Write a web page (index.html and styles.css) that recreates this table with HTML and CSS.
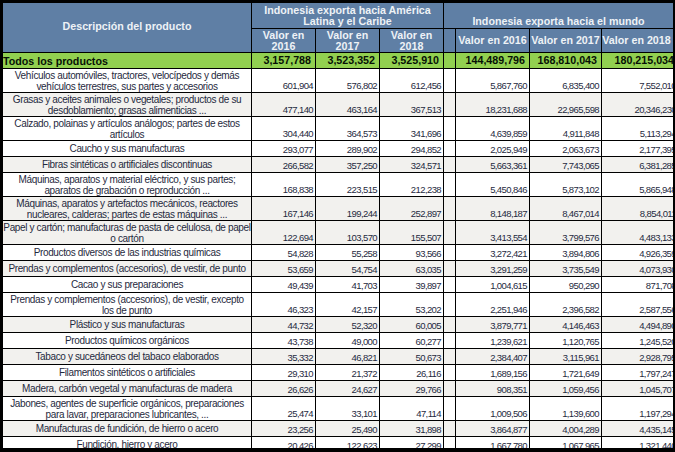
FILE: index.html
```html
<!DOCTYPE html>
<html lang="es">
<head>
<meta charset="utf-8">
<title>Indonesia exporta</title>
<link rel="stylesheet" href="styles.css">
</head>
<body>
<div class="sheet">
  <div class="grid">
    <div class="hd desc-h">Descripción del producto</div>
    <div class="hd grp-latam">Indonesia exporta hacia América<br>Latina y el Caribe</div>
    <div class="hd grp-world">Indonesia exporta hacia el mundo</div>
    <div class="hd">Valor en<br>2016</div>
    <div class="hd">Valor en<br>2017</div>
    <div class="hd">Valor en<br>2018</div>
    <div class="hd"></div>
    <div class="hd">Valor en 2016</div>
    <div class="hd">Valor en 2017</div>
    <div class="hd last">Valor en 2018</div>

    <div class="row total">
      <div class="lbl">Todos los productos</div>
      <div class="num">3,157,788</div><div class="num">3,523,352</div><div class="num">3,525,910</div><div></div>
      <div class="num">144,489,796</div><div class="num">168,810,043</div><div class="num">180,215,034</div>
    </div>

    <div class="row tall">
      <div class="desc">Vehículos automóviles, tractores, velocípedos y demás<br>vehículos terrestres, sus partes y accesorios</div>
      <div class="num">601,904</div><div class="num">576,802</div><div class="num">612,456</div><div></div>
      <div class="num">5,867,760</div><div class="num">6,835,400</div><div class="num">7,552,010</div>
    </div>
    <div class="row tall alt">
      <div class="desc">Grasas y aceites animales o vegetales; productos de su<br>desdoblamiento; grasas alimenticias ...</div>
      <div class="num">477,140</div><div class="num">463,164</div><div class="num">367,513</div><div></div>
      <div class="num">18,231,688</div><div class="num">22,965,598</div><div class="num">20,346,230</div>
    </div>
    <div class="row tall">
      <div class="desc">Calzado, polainas y artículos análogos; partes de estos<br>artículos</div>
      <div class="num">304,440</div><div class="num">364,573</div><div class="num">341,696</div><div></div>
      <div class="num">4,639,859</div><div class="num">4,911,848</div><div class="num">5,113,294</div>
    </div>
    <div class="row">
      <div class="desc">Caucho y sus manufacturas</div>
      <div class="num">293,077</div><div class="num">289,902</div><div class="num">294,852</div><div></div>
      <div class="num">2,025,949</div><div class="num">2,063,673</div><div class="num">2,177,395</div>
    </div>
    <div class="row alt">
      <div class="desc">Fibras sintéticas o artificiales discontinuas</div>
      <div class="num">266,582</div><div class="num">357,250</div><div class="num">324,571</div><div></div>
      <div class="num">5,663,361</div><div class="num">7,743,065</div><div class="num">6,381,285</div>
    </div>
    <div class="row tall">
      <div class="desc">Máquinas, aparatos y material eléctrico, y sus partes;<br>aparatos de grabación o reproducción ...</div>
      <div class="num">168,838</div><div class="num">223,515</div><div class="num">212,238</div><div></div>
      <div class="num">5,450,846</div><div class="num">5,873,102</div><div class="num">5,865,948</div>
    </div>
    <div class="row tall alt">
      <div class="desc">Máquinas, aparatos y artefactos mecánicos, reactores<br>nucleares, calderas; partes de estas máquinas ...</div>
      <div class="num">167,146</div><div class="num">199,244</div><div class="num">252,897</div><div></div>
      <div class="num">8,148,187</div><div class="num">8,467,014</div><div class="num">8,854,011</div>
    </div>
    <div class="row tall alt">
      <div class="desc">Papel y cartón; manufacturas de pasta de celulosa, de papel<br>o cartón</div>
      <div class="num">122,694</div><div class="num">103,570</div><div class="num">155,507</div><div></div>
      <div class="num">3,413,554</div><div class="num">3,799,576</div><div class="num">4,483,133</div>
    </div>
    <div class="row">
      <div class="desc">Productos diversos de las industrias químicas</div>
      <div class="num">54,828</div><div class="num">55,258</div><div class="num">93,566</div><div></div>
      <div class="num">3,272,421</div><div class="num">3,894,806</div><div class="num">4,926,359</div>
    </div>
    <div class="row alt">
      <div class="desc">Prendas y complementos (accesorios), de vestir, de punto</div>
      <div class="num">53,659</div><div class="num">54,754</div><div class="num">63,035</div><div></div>
      <div class="num">3,291,259</div><div class="num">3,735,549</div><div class="num">4,073,930</div>
    </div>
    <div class="row">
      <div class="desc">Cacao y sus preparaciones</div>
      <div class="num">49,439</div><div class="num">41,703</div><div class="num">39,897</div><div></div>
      <div class="num">1,004,615</div><div class="num">950,290</div><div class="num">871,708</div>
    </div>
    <div class="row tall">
      <div class="desc">Prendas y complementos (accesorios), de vestir, excepto<br>los de punto</div>
      <div class="num">46,323</div><div class="num">42,157</div><div class="num">53,202</div><div></div>
      <div class="num">2,251,946</div><div class="num">2,396,582</div><div class="num">2,587,556</div>
    </div>
    <div class="row alt">
      <div class="desc">Plástico y sus manufacturas</div>
      <div class="num">44,732</div><div class="num">52,320</div><div class="num">60,005</div><div></div>
      <div class="num">3,879,771</div><div class="num">4,146,463</div><div class="num">4,494,890</div>
    </div>
    <div class="row">
      <div class="desc">Productos químicos orgánicos</div>
      <div class="num">43,738</div><div class="num">49,000</div><div class="num">60,277</div><div></div>
      <div class="num">1,239,621</div><div class="num">1,120,765</div><div class="num">1,245,520</div>
    </div>
    <div class="row alt">
      <div class="desc">Tabaco y sucedáneos del tabaco elaborados</div>
      <div class="num">35,332</div><div class="num">46,821</div><div class="num">50,673</div><div></div>
      <div class="num">2,384,407</div><div class="num">3,115,961</div><div class="num">2,928,795</div>
    </div>
    <div class="row">
      <div class="desc">Filamentos sintéticos o artificiales</div>
      <div class="num">29,310</div><div class="num">21,372</div><div class="num">26,116</div><div></div>
      <div class="num">1,689,156</div><div class="num">1,721,649</div><div class="num">1,797,247</div>
    </div>
    <div class="row alt">
      <div class="desc">Madera, carbón vegetal y manufacturas de madera</div>
      <div class="num">26,626</div><div class="num">24,627</div><div class="num">29,766</div><div></div>
      <div class="num">908,351</div><div class="num">1,059,456</div><div class="num">1,045,707</div>
    </div>
    <div class="row tall">
      <div class="desc">Jabones, agentes de superficie orgánicos, preparaciones<br>para lavar, preparaciones lubricantes, ...</div>
      <div class="num">25,474</div><div class="num">33,101</div><div class="num">47,114</div><div></div>
      <div class="num">1,009,506</div><div class="num">1,139,600</div><div class="num">1,197,294</div>
    </div>
    <div class="row alt">
      <div class="desc">Manufacturas de fundición, de hierro o acero</div>
      <div class="num">23,256</div><div class="num">25,490</div><div class="num">31,898</div><div></div>
      <div class="num">3,864,877</div><div class="num">4,004,289</div><div class="num">4,435,145</div>
    </div>
    <div class="row">
      <div class="desc">Fundición, hierro y acero</div>
      <div class="num">20,426</div><div class="num">122,623</div><div class="num">27,299</div><div></div>
      <div class="num">1,667,780</div><div class="num">1,067,965</div><div class="num">1,321,440</div>
    </div>
  </div>
</div>
</body>
</html>
```

FILE: styles.css
```css
html, body {
  margin: 0;
  padding: 0;
  background: #000;
}

.sheet {
  margin: 3px 0 0 3px;
  width: 670px;
  height: 445px;
  overflow: hidden;
  background: #000;
}

.grid {
  display: grid;
  grid-template-columns: 248px 63px 63px 63px 11px 73px 71px 76px;
  grid-template-rows: 25px 23px;
  gap: 1px;
  background: #000;
  font-family: "Liberation Sans", Arial, sans-serif;
}

/* header */
.hd {
  background: #5f7fa5;
  color: #eef2f6;
  font-weight: bold;
  font-size: 10.7px;
  line-height: 11px;
  display: flex;
  align-items: center;
  justify-content: center;
  text-align: center;
  white-space: nowrap;
}

.desc-h {
  grid-row: span 2;
  padding-bottom: 3px;
}

.grp-latam {
  grid-column: span 3;
}

.grp-world {
  grid-column: span 4;
  align-items: flex-end;
  padding-right: 5px;
  padding-bottom: 1px;
}

.hd.last {
  padding-right: 7px;
}

/* body rows */
.row {
  display: contents;
}

.row > div {
  height: 15px;
  background: #fff;
  color: #1f2a3e;
  display: flex;
  white-space: nowrap;
  overflow: hidden;
}

.row.tall > div {
  height: 23px;
}

.row.alt > div {
  background: #f2f1ee;
}

.desc {
  font-size: 10px;
  letter-spacing: -0.36px;
  line-height: 11px;
  align-items: center;
  justify-content: center;
  text-align: center;
}

.num {
  font-size: 9.5px;
  letter-spacing: -0.6px;
  line-height: 11px;
  align-items: flex-end;
  justify-content: flex-end;
  padding-right: 2px;
  padding-bottom: 1px;
  box-sizing: border-box;
}

/* total row */
.row.total > div {
  background: #92d050;
  color: #071006;
  font-weight: bold;
  font-size: 10.7px;
  letter-spacing: 0;
  line-height: 12px;
  align-items: center;
}

.row.total .num {
  padding-right: 4px;
}

.row.total .lbl {
  justify-content: flex-start;
}
```
